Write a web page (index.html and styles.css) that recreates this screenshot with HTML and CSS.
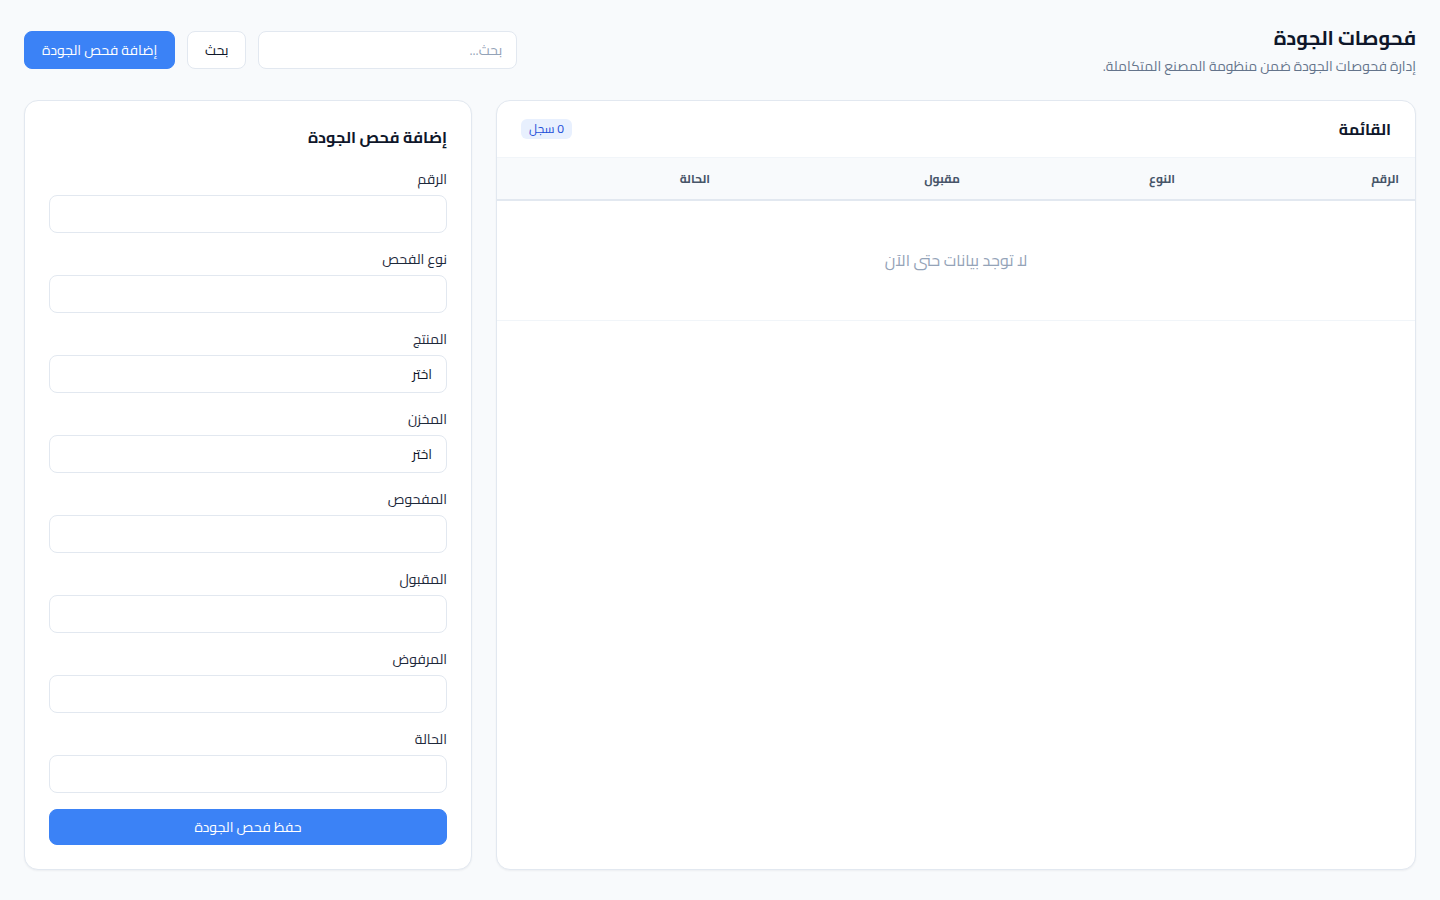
FILE: index.html
```html
<!DOCTYPE html>
<html lang="ar" dir="rtl">
<head>
<meta charset="utf-8">
<title>فحوصات الجودة</title>
<link rel="stylesheet" href="styles.css">
</head>
<body>
<div class="page">
  <header class="top">
    <div class="heading">
      <h1 class="title">فحوصات الجودة</h1>
      <p class="subtitle">إدارة فحوصات الجودة ضمن منظومة المصنع المتكاملة.</p>
    </div>
    <div class="actions">
      <input class="search" type="text" placeholder="بحث...">
      <button class="btn btn-light">بحث</button>
      <button class="btn btn-primary btn-add">إضافة فحص الجودة</button>
    </div>
  </header>
  <main class="grid">
    <section class="card list">
      <div class="list-head">
        <h2 class="card-title">القائمة</h2>
        <span class="badge">0 سجل</span>
      </div>
      <table class="table">
        <thead>
          <tr>
            <th class="c1">الرقم</th>
            <th class="c2">النوع</th>
            <th class="c3">مقبول</th>
            <th class="c4">الحالة</th>
          </tr>
        </thead>
        <tbody>
          <tr><td colspan="4" class="empty">لا توجد بيانات حتى الآن</td></tr>
        </tbody>
      </table>
    </section>
    <section class="card form">
      <h2 class="card-title form-title">إضافة فحص الجودة</h2>
      <div class="field"><label class="label">الرقم</label><input class="input" type="text"></div>
      <div class="field"><label class="label">نوع الفحص</label><input class="input" type="text"></div>
      <div class="field"><label class="label">المنتج</label><div class="input select">اختر</div></div>
      <div class="field"><label class="label">المخزن</label><div class="input select">اختر</div></div>
      <div class="field"><label class="label">المفحوص</label><input class="input" type="text"></div>
      <div class="field"><label class="label">المقبول</label><input class="input" type="text"></div>
      <div class="field"><label class="label">المرفوض</label><input class="input" type="text"></div>
      <div class="field"><label class="label">الحالة</label><input class="input" type="text"></div>
      <button class="btn btn-primary btn-block">حفظ فحص الجودة</button>
    </section>
  </main>
</div>
</body>
</html>
```
FILE: styles.css
```css
* { box-sizing: border-box; }
html, body { margin: 0; padding: 0; }
body {
  background: #f8fafc;
  font-family: "Cairo", "Tajawal", sans-serif;
  color: #0f172a;
  font-size: 14px;
}
.page { padding: 24px; }
.top {
  display: flex;
  justify-content: space-between;
  align-items: center;
}
.title { margin: 0; font-size: 20px; line-height: 28px; font-weight: 700; color: #0f172a; }
.subtitle { margin: 4px 0 0; font-size: 13.9px; line-height: 20px; color: #64748b; }
.actions { display: flex; gap: 12px; align-items: center; }
.search {
  width: 259px; height: 38px;
  border: 1px solid #e2e8f0; border-radius: 8px;
  background: #fff; padding: 0 14px;
  font-family: inherit; font-size: 14px; color: #0f172a;
  direction: rtl; outline: none;
}
.search::placeholder { color: #94a3b8; }
.btn {
  height: 38px; border-radius: 8px; font-family: inherit; font-size: 14px;
  padding: 0 15px; cursor: pointer;
}
.btn-light { background: #fff; border: 1px solid #e2e8f0; color: #0f172a; width: 59px; padding: 0; }
.btn-primary { background: #3b82f6; border: 1px solid #3b82f6; color: #fff; }
.btn-add { padding: 0 17px; }
.grid {
  margin-top: 24px;
  display: grid;
  grid-template-columns: 1fr 448px;
  gap: 24px;
}
.card {
  background: #fff;
  border: 1px solid #e2e8f0;
  border-radius: 14px;
  box-shadow: 0 1px 2px rgba(15, 23, 42, 0.05);
  height: 770px;
}
.list { overflow: hidden; }
.list-head {
  display: flex; justify-content: space-between; align-items: center;
  height: 56px; padding: 0 24px;
}
.card-title { margin: 0; font-size: 16px; line-height: 24px; font-weight: 700; color: #0f172a; }
.badge {
  background: #e8f0fe; color: #1d4ed8; font-size: 12px; line-height: 20px;
  padding: 0 8px; border-radius: 6px;
}
.table { width: 100%; border-collapse: collapse; }
.table th {
  background: #f8fafc; height: 42px; text-align: right; padding: 0 16px;
  font-size: 12px; font-weight: 700; color: #475569;
  border-top: 1px solid #f1f5f9;
  border-bottom: 2px solid #e2e8f0;
}
.c1 { width: 224px; }
.c2 { width: 215px; }
.c3 { width: 250px; }
.empty {
  text-align: center; height: 121px; color: #94a3b8; font-size: 16px;
  border-bottom: 1px solid #f1f5f9;
}
.form { padding: 24px; display: flex; flex-direction: column; }
.form-title { margin-bottom: 20px; }
.field { display: flex; flex-direction: column; margin-bottom: 16px; }
.label { font-size: 14px; line-height: 20px; color: #1e293b; margin-bottom: 6px; }
.input {
  height: 38px; width: 100%;
  border: 1px solid #e2e8f0; border-radius: 8px; background: #fff;
  padding: 0 14px; font-family: inherit; font-size: 14px; color: #0f172a;
  outline: none;
}
.select { display: flex; align-items: center; }
.btn-block { width: 100%; height: 36px; }
```
